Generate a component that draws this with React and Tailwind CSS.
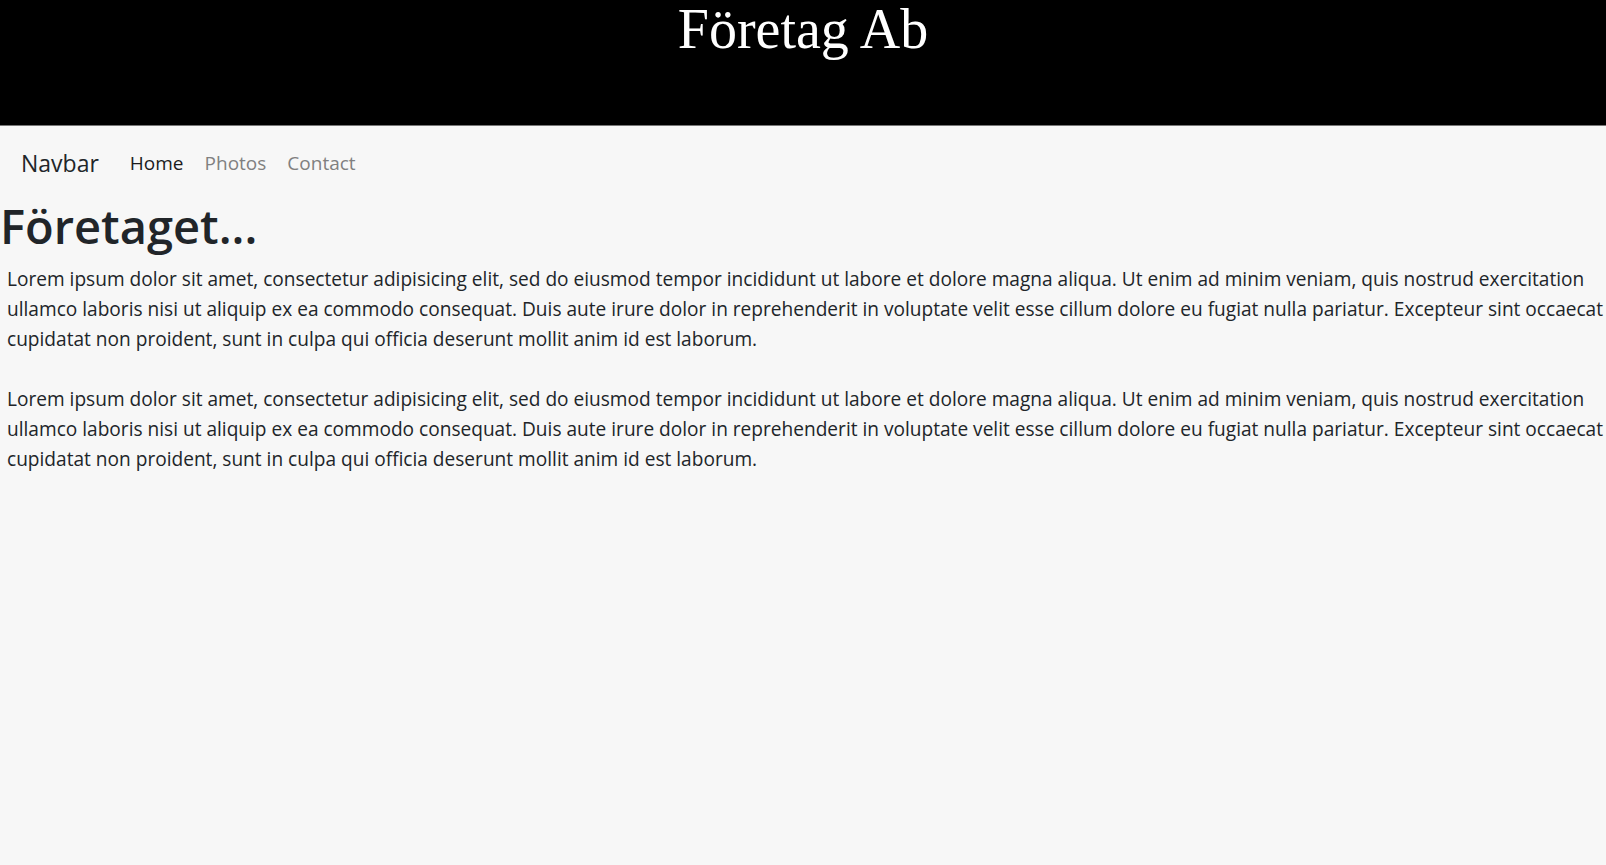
export default function App() {
  const lines = [
    "Lorem ipsum dolor sit amet, consectetur adipisicing elit, sed do eiusmod tempor incididunt ut labore et dolore magna aliqua. Ut enim ad minim veniam, quis nostrud exercitation",
    "ullamco laboris nisi ut aliquip ex ea commodo consequat. Duis aute irure dolor in reprehenderit in voluptate velit esse cillum dolore eu fugiat nulla pariatur. Excepteur sint occaecat",
    "cupidatat non proident, sunt in culpa qui officia deserunt mollit anim id est laborum.",
  ];
  const Para = () => (
    <p className="m-0 text-[19.1px] leading-[30px] text-[#212529]">
      {lines.map((l, i) => (
        <span key={i} className="block whitespace-nowrap">{l}</span>
      ))}
    </p>
  );
  return (
    <div className="min-h-[865px] bg-[#f7f7f7]" style={{ fontFamily: '"Open Sans", "Noto Sans", sans-serif' }}>
      <header className="h-[126px] bg-black border-b border-[#777] flex justify-center">
        <h1 className="m-0 text-[56px] leading-[58px] text-white font-normal" style={{ fontFamily: '"Liberation Serif", serif' }}>
          Företag Ab
        </h1>
      </header>
      <nav className="flex items-center h-[70px] pt-[4px] px-[21px]">
        <span className="text-[23px] text-[#212529] mr-[31px]">Navbar</span>
        <div className="flex items-center gap-[21px] text-[19px]">
          <span className="text-[#1c1c1c]">Home</span>
          <span className="text-[#808080]">Photos</span>
          <span className="text-[#808080]">Contact</span>
        </div>
      </nav>
      <h2 className="m-0 text-[47px] leading-[60px] font-semibold text-[#212529]">Företaget...</h2>
      <div className="pl-[7px] pt-[8px] flex flex-col gap-[30px]">
        <Para />
        <Para />
      </div>
    </div>
  );
}
